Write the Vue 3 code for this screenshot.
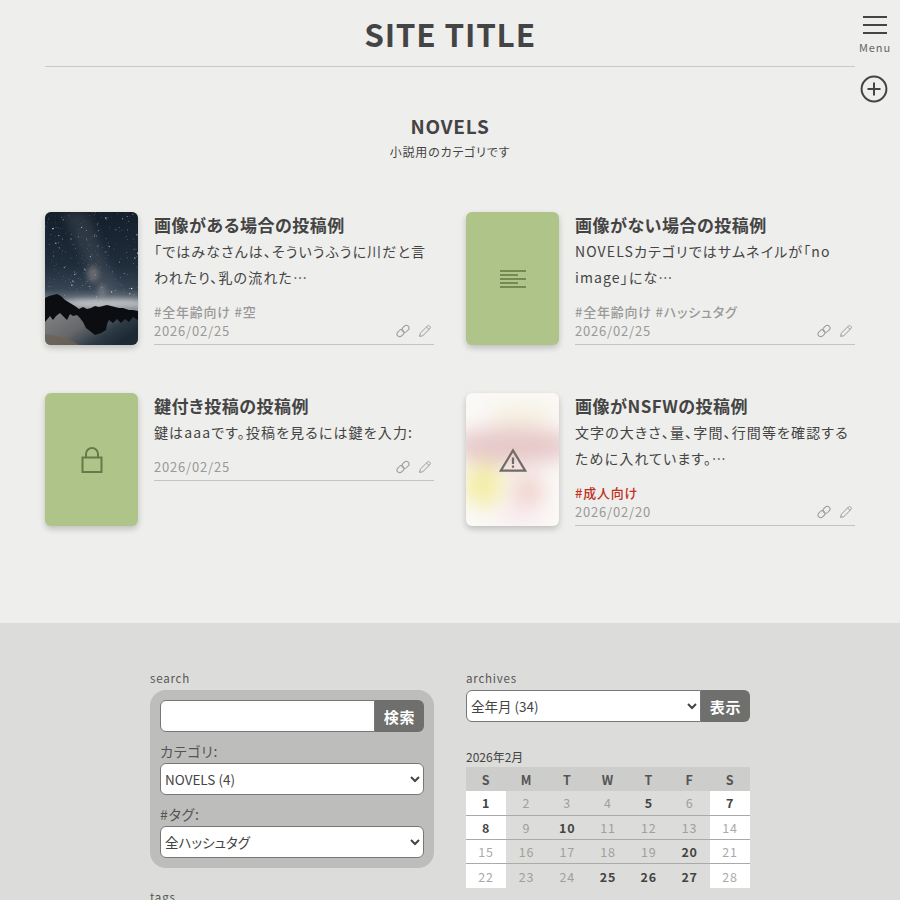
<template>
  <div class="page">
    <header class="site-head">
      <h1>SITE TITLE</h1>
    </header>

    <button class="menu-btn">
      <span class="bars"><i></i><i></i><i></i></span>
      <span class="menu-label">Menu</span>
    </button>
    <svg class="plus-btn" viewBox="0 0 28 28" width="28" height="28" fill="none" stroke="#444" stroke-width="2">
      <circle cx="14" cy="14" r="12.4" />
      <path d="M14 7.5v13M7.5 14h13" />
    </svg>

    <section class="category">
      <h2>NOVELS</h2>
      <p>小説用のカテゴリです</p>
    </section>

    <main class="posts">
      <article v-for="post in posts" :key="post.title" class="post">
        <div class="thumb" :class="post.kind">
          <svg v-if="post.kind === 'photo'" class="sky" viewBox="0 0 93 133" preserveAspectRatio="none">
            <defs>
              <linearGradient id="skyGrad" x1="0" y1="0" x2="0" y2="1">
                <stop offset="0" stop-color="#141f2b" />
                <stop offset="0.4" stop-color="#1f2c3a" />
                <stop offset="0.58" stop-color="#364453" />
                <stop offset="0.7" stop-color="#8b9198" />
              </linearGradient>
              <linearGradient id="groundGrad" x1="0" y1="0" x2="1" y2="0.6">
                <stop offset="0" stop-color="#868688" />
                <stop offset="0.5" stop-color="#67686b" />
                <stop offset="0.8" stop-color="#2c3a45" />
                <stop offset="1" stop-color="#1c2a35" />
              </linearGradient>
              <filter id="soft" x="-50%" y="-50%" width="200%" height="200%"><feGaussianBlur stdDeviation="5" /></filter>
              <filter id="soft2" x="-50%" y="-50%" width="200%" height="200%"><feGaussianBlur stdDeviation="2.5" /></filter>
            </defs>
            <rect width="93" height="133" fill="url(#skyGrad)" />
            <path d="M18 0 L42 0 L80 92 L58 92 Z" fill="#6d7680" opacity="0.25" filter="url(#soft)" />
            <ellipse cx="48" cy="62" rx="6" ry="8" fill="#9c9092" opacity="0.5" filter="url(#soft2)" />
            <ellipse cx="57" cy="79" rx="4" ry="7" fill="#9a9799" opacity="0.45" filter="url(#soft2)" />
            <ellipse cx="60" cy="91" rx="44" ry="4" fill="#d0d1d3" opacity="0.75" filter="url(#soft2)" />
            <circle v-for="(s, i) in stars" :key="i" :cx="s.x" :cy="s.y" :r="s.r" fill="#fff" :opacity="s.o" />
            <path d="M0 133V96L93 100V133Z" fill="url(#groundGrad)" />
            <path d="M0 122L22 126 34 133H0Z" fill="#6b6258" opacity="0.8" />
            <path d="M0 86L4 84 8 83 12 82 16 84 20 88 25 91 30 94 34 97 38 95 42 97 46 96 50 94 54 95 58 94 62 93 66 94 70 95 74 96 78 96 84 98 88 98 93 99V108L88 105 84 110 80 107 76 111 72 107 68 111 64 108 62 112 61 118 56 121 50 123 45 119 41 116 38 110 35 106 32 103 28 104 25 102 22 108 19 105 15 101 11 104 8 108 5 104 0 110Z" fill="#0c0d10" />
          </svg>

          <svg v-if="post.kind === 'noimage'" class="glyph" viewBox="0 0 28 18" width="28" height="18" fill="none" stroke="#61773f" stroke-width="1.3">
            <path d="M1 1h26M1 5h18M1 9h26M1 13h18" />
            <path d="M1 17h26" stroke-width="1.6" />
          </svg>

          <svg v-if="post.kind === 'locked'" class="glyph" viewBox="0 0 22 28" width="22" height="28" fill="none" stroke="#65794a" stroke-width="2">
            <rect x="1.5" y="11.5" width="19" height="14.5" />
            <path d="M5 11.5V8a6 6 0 0 1 12 0v3.5" />
          </svg>

          <template v-if="post.kind === 'nsfw'">
            <div class="blur">
              <i class="b1"></i><i class="b2"></i><i class="b3"></i><i class="b4"></i><i class="b5"></i>
            </div>
            <svg class="glyph warn" viewBox="0 0 28 24" width="28" height="24" fill="none" stroke="#716b69" stroke-width="2.2">
              <path d="M14 2.4L1.8 22.6h24.4Z" stroke-linejoin="miter" />
              <path d="M14 9.5v6.5M14 17.6v2.2" />
            </svg>
          </template>
        </div>

        <div class="body">
          <h3>{{ post.title }}</h3>
          <p class="excerpt" :class="{ short: !post.tags }">{{ post.text }}</p>
          <div v-if="post.tags" class="tags" :class="{ adult: post.adult }">{{ post.tags }}</div>
          <div class="meta">
            <time>{{ post.date }}</time>
            <span class="actions">
              <svg viewBox="0 0 14 14" width="14" height="14" fill="none" stroke="#999" stroke-width="1">
                <rect x="6.8" y="1" width="5.4" height="7.6" rx="2.7" transform="rotate(45 9.5 4.8)" />
                <rect x="1.8" y="5.4" width="5.4" height="7.6" rx="2.7" transform="rotate(45 4.5 9.2)" />
              </svg>
              <svg viewBox="0 0 14 14" width="14" height="14" fill="none" stroke="#999" stroke-width="1">
                <path d="M1.6 12.4l.7-3.2 7.2-7.2a1.4 1.4 0 0 1 2 0l.5.5a1.4 1.4 0 0 1 0 2l-7.2 7.2Z" />
                <path d="M8.6 3l2.4 2.4" />
              </svg>
            </span>
          </div>
        </div>
      </article>
    </main>

    <footer class="foot">
      <div class="foot-inner">
        <div class="col">
          <div class="label">search</div>
          <form class="search-box" @submit.prevent>
            <div class="joined">
              <input type="text" />
              <button>検索</button>
            </div>
            <label>カテゴリ:</label>
            <select><option>NOVELS (4)</option></select>
            <label>#タグ:</label>
            <select><option>全ハッシュタグ</option></select>
          </form>
          <div class="label tags-label">tags</div>
        </div>

        <div class="col">
          <div class="label">archives</div>
          <div class="joined arch">
            <select><option>全年月 (34)</option></select>
            <button>表示</button>
          </div>

          <div class="cal-title">2026年2月</div>
          <table class="cal">
            <thead>
              <tr><th v-for="(d, i) in week" :key="i">{{ d }}</th></tr>
            </thead>
            <tbody>
              <tr v-for="(row, r) in days" :key="r">
                <td v-for="(d, i) in row" :key="d" :class="{ weekend: i === 0 || i === 6, on: posted.includes(d) }">{{ d }}</td>
              </tr>
            </tbody>
          </table>
        </div>
      </div>
    </footer>
  </div>
</template>

<script setup>
const posts = [
  { kind: 'photo', title: '画像がある場合の投稿例', text: '「ではみなさんは、そういうふうに川だと言われたり、乳の流れた…', tags: '#全年齢向け #空', date: '2026/02/25' },
  { kind: 'noimage', title: '画像がない場合の投稿例', text: 'NOVELSカテゴリではサムネイルが「no image」にな…', tags: '#全年齢向け #ハッシュタグ', date: '2026/02/25' },
  { kind: 'locked', title: '鍵付き投稿の投稿例', text: '鍵はaaaです。投稿を見るには鍵を入力:', date: '2026/02/25' },
  { kind: 'nsfw', title: '画像がNSFWの投稿例', text: '文字の大きさ、量、字間、行間等を確認するために入れています。…', tags: '#成人向け', adult: true, date: '2026/02/20' }
]

// small seeded generator so the star field stays the same each run
let seed = 11
const rnd = () => {
  seed = (seed * 16807) % 2147483647
  return seed / 2147483647
}
const stars = Array.from({ length: 340 }, () => ({
  x: rnd() * 93,
  y: rnd() * 94,
  r: 0.18 + rnd() * rnd() * rnd() * 0.9,
  o: 0.4 + rnd() * 0.6
}))

const week = ['S', 'M', 'T', 'W', 'T', 'F', 'S']
const days = [
  [1, 2, 3, 4, 5, 6, 7],
  [8, 9, 10, 11, 12, 13, 14],
  [15, 16, 17, 18, 19, 20, 21],
  [22, 23, 24, 25, 26, 27, 28]
]
const posted = [1, 5, 7, 8, 10, 20, 25, 26, 27]
</script>

<style>
html, body {
  margin: 0;
  background: #eeeeec;
  overflow: hidden;
}
</style>

<style scoped>
.page {
  position: relative;
  height: 900px;
  font-family: "Noto Sans CJK JP", "Noto Sans", sans-serif;
  font-feature-settings: "palt";
  color: #444;
  letter-spacing: 0.05em;
  background: #eeeeec;
}

.site-head {
  margin: 0 45px;
  height: 66px;
  border-bottom: 1px solid #c9c9c7;
  text-align: center;
}
.site-head h1 {
  margin: 0;
  font-size: 31.5px;
  line-height: 66px;
  font-weight: 700;
}

.menu-btn {
  position: absolute;
  top: 16px;
  right: 0;
  width: 50px;
  padding: 0;
  border: 0;
  background: none;
  color: #666;
  font-family: inherit;
  text-align: center;
}
.bars {
  display: block;
  width: 24px;
  margin: 0 auto;
}
.bars i {
  display: block;
  height: 2px;
  margin-bottom: 6px;
  background: #444;
}
.menu-label {
  display: block;
  margin-top: 2px;
  font-size: 11px;
  line-height: 14px;
  letter-spacing: 0.08em;
}
.plus-btn {
  position: absolute;
  top: 75px;
  right: 12px;
}

.category {
  margin-top: 45px;
  text-align: center;
}
.category h2 {
  margin: 0;
  font-size: 19px;
  line-height: 28px;
  font-weight: 700;
}
.category p {
  margin: 0;
  font-size: 12px;
  line-height: 23px;
}

.posts {
  display: grid;
  grid-template-columns: 389px 389px;
  column-gap: 32px;
  row-gap: 48px;
  align-items: start;
  margin: 49px 45px 97px;
}
.post {
  display: flex;
  gap: 16px;
  min-height: 133px;
}

.thumb {
  position: relative;
  flex: none;
  display: flex;
  align-items: center;
  justify-content: center;
  width: 93px;
  height: 133px;
  border-radius: 6px;
  overflow: hidden;
  background: #aec488;
  box-shadow: 0 3px 6px rgba(0, 0, 0, 0.2);
}
.sky {
  display: block;
  width: 93px;
  height: 133px;
}
.thumb.nsfw {
  background: #fbf9f7;
}
.blur {
  position: absolute;
  inset: 0;
  filter: blur(10px);
}
.blur i {
  position: absolute;
  display: block;
  border-radius: 50%;
}
.b1 { left: -15px; top: 34px; width: 125px; height: 38px; background: #e6c8c8; }
.b2 { left: -2px; top: 70px; width: 38px; height: 44px; background: #f3eda4; }
.b3 { left: 46px; top: 82px; width: 32px; height: 32px; background: #efd0cb; }
.b4 { left: 22px; top: 12px; width: 66px; height: 18px; background: #f5efdb; }
.b5 { left: 28px; top: 110px; width: 50px; height: 24px; background: #f7ebee; }
.glyph {
  position: relative;
  display: block;
}
.warn {
  margin-top: 1px;
}

.body {
  flex: 1;
  min-width: 0;
}
.body h3 {
  margin: 0;
  font-size: 17px;
  line-height: 26px;
  font-weight: 700;
  letter-spacing: 0.03em;
}
.excerpt {
  margin: 0;
  font-size: 14px;
  line-height: 26px;
  letter-spacing: 0.08em;
  padding-bottom: 12px;
}
.excerpt.short {
  padding-bottom: 13px;
}
.tags {
  font-size: 13px;
  line-height: 20px;
  font-weight: 500;
  color: #999;
}
.tags.adult {
  color: #c0301c;
}
.meta {
  display: flex;
  justify-content: space-between;
  align-items: center;
  box-sizing: border-box;
  height: 23px;
  padding-bottom: 4px;
  border-bottom: 1px solid #c4c4c2;
  color: #999;
  font-size: 13px;
}
.meta time {
  margin-top: -1px;
}
.actions {
  display: flex;
  gap: 8px;
  margin-right: 2px;
}
.actions svg {
  display: block;
}

.foot {
  height: 277px;
  overflow: hidden;
  background: #dcdcda;
}
.foot-inner {
  display: grid;
  grid-template-columns: 284px 284px;
  column-gap: 32px;
  justify-content: center;
  padding-top: 47px;
}
.label {
  font-size: 11.5px;
  line-height: 16px;
  color: #555;
  margin-bottom: 4px;
}
.search-box {
  padding: 10px;
  border-radius: 16px;
  background: #bdbdbb;
}
.search-box label {
  display: block;
  margin-top: 7px;
  font-size: 14px;
  line-height: 24px;
  color: #555;
}
.joined {
  display: flex;
}
input, select {
  box-sizing: border-box;
  display: block;
  width: 100%;
  height: 32px;
  margin: 0;
  padding: 0;
  border: 1px solid #777;
  border-radius: 6px;
  background-color: #fff;
  color: #444;
  font-family: inherit;
  font-feature-settings: "palt";
  font-size: 13.5px;
  letter-spacing: 0;
}
.joined input, .joined select {
  flex: 1;
  min-width: 0;
  border-radius: 6px 0 0 6px;
}
.joined button {
  flex: none;
  width: 49px;
  height: 32px;
  padding: 0;
  border: 0;
  border-radius: 0 6px 6px 0;
  background: #6f6f6d;
  color: #fff;
  font-family: inherit;
  font-feature-settings: "palt";
  font-size: 15px;
  font-weight: 700;
  letter-spacing: 0.05em;
}
.tags-label {
  margin-top: 21px;
}

.cal-title {
  margin-top: 25px;
  font-size: 12px;
  line-height: 20px;
  color: #444;
  letter-spacing: 0;
}
.cal {
  width: 100%;
  border-collapse: collapse;
  table-layout: fixed;
  font-size: 12.5px;
}
.cal th {
  height: 24px;
  padding: 0;
  background: #cdcdcb;
  font-weight: 700;
  color: #555;
}
.cal th:first-child, .cal th:last-child {
  width: 40px;
}
.cal td {
  box-sizing: border-box;
  height: 24.3px;
  padding: 0;
  text-align: center;
  color: #a0a09e;
  border-bottom: 1px solid #aaaaa8;
}
.cal tr:last-child td {
  border-bottom: 0;
}
.cal td.weekend {
  background: #fff;
  color: #aaa;
}
.cal td.on {
  color: #444;
  font-weight: 700;
}
</style>
